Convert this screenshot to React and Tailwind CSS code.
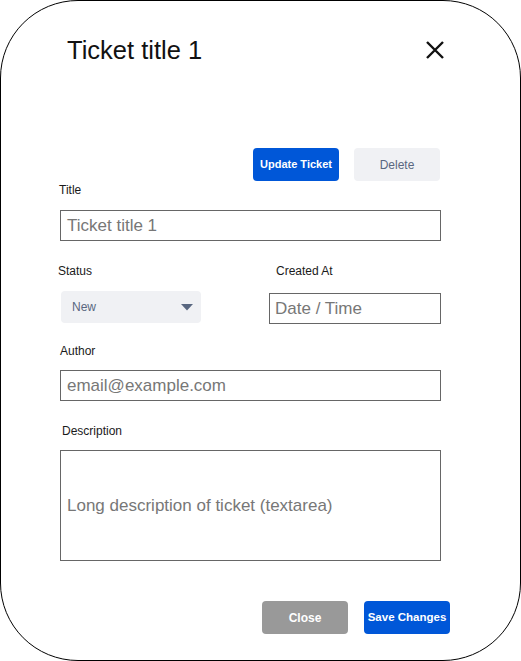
import React from 'react';

const Label = ({ children, className = '' }) => (
  <div className={`text-[12px] leading-[14px] text-[#1a1a1a] ${className}`}>{children}</div>
);

const Field = ({ text, className = '' }) => (
  <div className={`flex items-center border border-[#666666] bg-white px-[6px] text-[17px] text-[#777777] ${className}`}>
    {text}
  </div>
);

export default function App() {
  return (
    <div className="bg-white w-[521px] h-[661px] font-['Liberation_Sans',Arial,sans-serif]">
      <div className="w-[521px] h-[661px] border border-black rounded-[78px] bg-white">
        {/* Header */}
        <div className="mt-[31px] h-[36px] flex items-center justify-between pl-[66px] pr-[76px]">
          <h1 className="text-[25.5px] leading-[30px] text-[#111]">Ticket title 1</h1>
          <svg width="18" height="18" viewBox="0 0 18 18" className="block">
            <path d="M1 1 L17 17 M17 1 L1 17" stroke="#111" strokeWidth="2.4" strokeLinecap="butt" />
          </svg>
        </div>

        {/* Top actions */}
        <div className="mt-[80px] flex justify-end gap-[15px] pr-[80px]">
          <button className="w-[86px] h-[33px] rounded-[4px] bg-[#0057d8] text-white text-[11px] font-bold">
            Update Ticket
          </button>
          <button className="w-[86px] h-[33px] rounded-[4px] bg-[#f0f1f4] text-[#596780] text-[12px]">
            Delete
          </button>
        </div>

        <div className="ml-[59px] w-[381px]">
          <Label className="mt-[2px] -ml-[1px]">Title</Label>
          <Field text="Ticket title 1" className="mt-[13px] h-[31px]" />

          <div className="mt-[23px] flex">
            <div className="w-[209px]">
              <Label className="-ml-[2px]">Status</Label>
              <div className="mt-[13px] ml-[1px] w-[140px] h-[32px] rounded-[4px] bg-[#f0f1f4] flex items-center justify-between pl-[11px] pr-[8px] text-[12px] text-[#596780]">
                <span>New</span>
                <svg width="12" height="7" viewBox="0 0 12 7" className="block">
                  <path d="M0 0 H12 L6 6.5 Z" fill="#596780" />
                </svg>
              </div>
            </div>
            <div className="flex-1">
              <Label className="ml-[7px]">Created At</Label>
              <Field text="Date / Time" className="mt-[15px] h-[31px] pl-[5px]" />
            </div>
          </div>

          <Label className="mt-[20px]">Author</Label>
          <Field text="email@example.com" className="mt-[12px] h-[31px]" />

          <Label className="mt-[23px] ml-[2px]">Description</Label>
          <Field text="Long description of ticket (textarea)" className="mt-[12px] h-[111px]" />
        </div>

        {/* Footer actions */}
        <div className="mt-[40px] flex justify-end gap-[16px] pr-[70px]">
          <button className="w-[86px] h-[33px] rounded-[4px] bg-[#999999] text-white text-[12px] font-bold">
            Close
          </button>
          <button className="w-[86px] h-[33px] rounded-[4px] bg-[#0057d8] text-white text-[11.5px] font-bold">
            Save Changes
          </button>
        </div>
      </div>
    </div>
  );
}
